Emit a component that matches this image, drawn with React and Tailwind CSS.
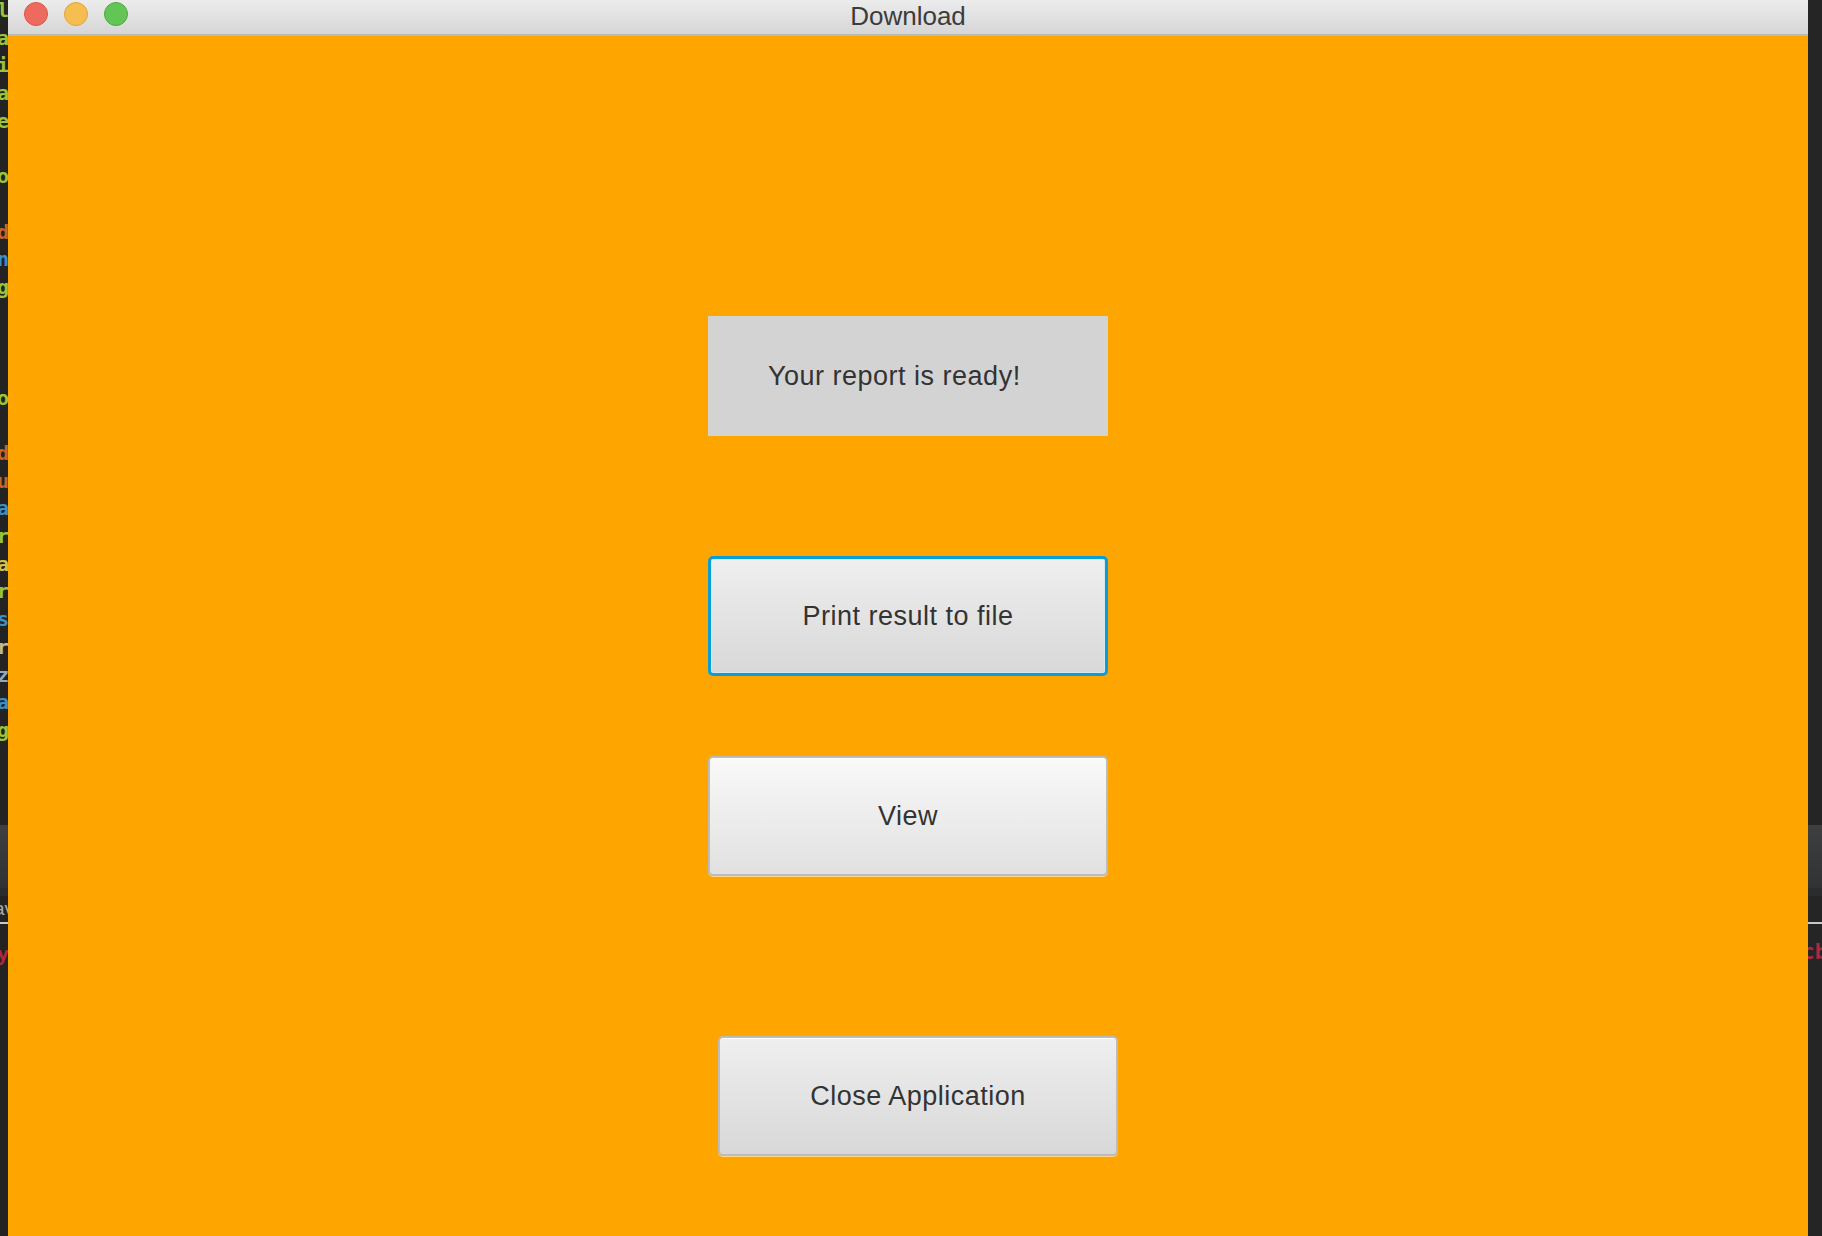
import React from 'react';

const CODE_ROWS = [
  { row: 0, ch: 'la', c: 'text-[#9cc43a]' },
  { row: 1, ch: 'a:', c: 'text-[#9cc43a]' },
  { row: 2, ch: 'i:', c: 'text-[#9cc43a]' },
  { row: 3, ch: 'a:', c: 'text-[#9cc43a]' },
  { row: 4, ch: 'e', c: 'text-[#9cc43a]' },
  { row: 6, ch: 'o', c: 'text-[#9cc43a]' },
  { row: 8, ch: 'd', c: 'text-[#c8652a]' },
  { row: 9, ch: 'n(', c: 'text-[#3b8fc2]' },
  { row: 10, ch: 'g(', c: 'text-[#9cc43a]' },
  { row: 14, ch: 'o', c: 'text-[#9cc43a]' },
  { row: 16, ch: 'd', c: 'text-[#c8652a]' },
  { row: 17, ch: 'u(', c: 'text-[#c8652a]' },
  { row: 18, ch: 'a(', c: 'text-[#3b8fc2]' },
  { row: 19, ch: 'r(', c: 'text-[#9cc43a]' },
  { row: 20, ch: 'a', c: 'text-[#d2c24c]' },
  { row: 21, ch: 'r(', c: 'text-[#9cc43a]' },
  { row: 22, ch: 's', c: 'text-[#3b8fc2]' },
  { row: 23, ch: 'r', c: 'text-[#c9b98c]' },
  { row: 24, ch: 'z', c: 'text-[#8ea9c2]' },
  { row: 25, ch: 'a(', c: 'text-[#3b8fc2]' },
  { row: 26, ch: 'g(', c: 'text-[#9cc43a]' },
];

function EditorBand({ children, bottom }) {
  // the strip of the editor tool window peeking out below the code
  return (
    <>
      <div className="h-[63px] bg-gradient-to-b from-[#3d3f41] to-[#303234]" />
      <div className="h-[8px] bg-[#2a2c2e]" />
      <div className="h-[26px] flex items-center overflow-hidden whitespace-nowrap">{children}</div>
      <div className="h-[2px] bg-[#c8c8c8]" />
      <div className="h-[50px] flex items-center overflow-hidden whitespace-nowrap">{bottom}</div>
    </>
  );
}

function LeftEdge() {
  const lines = [];
  for (let i = 0; i < 28; i++) {
    const hit = CODE_ROWS.find(r => r.row === i);
    lines.push(
      <div key={i} className={`h-[27.7px] leading-[27.7px] whitespace-nowrap ${hit ? hit.c : ''}`}>
        {hit ? hit.ch : '\u00a0'}
      </div>
    );
  }
  return (
    <div className="w-[8px] flex-shrink-0 flex flex-col bg-[#232323] overflow-hidden">
      <div className="h-[825px] overflow-hidden -ml-[3px] font-['DejaVu_Sans_Mono',monospace] text-[20px] font-bold">
        <div className="-mt-[3px]">{lines}</div>
      </div>
      <EditorBand
        bottom={<span className="-ml-[3px] mt-[10px] font-['DejaVu_Sans_Mono',monospace] text-[20px] font-bold text-[#b0283d]">y</span>}
      >
        <span className="-ml-[6px] font-['Liberation_Sans',sans-serif] text-[19px] text-[#a9abad]">av</span>
      </EditorBand>
    </div>
  );
}

function RightEdge() {
  return (
    <div className="w-[14px] flex-shrink-0 flex flex-col bg-[#252525] overflow-hidden">
      <div className="h-[825px]" />
      <EditorBand
        bottom={<span className="-ml-[6px] mt-[8px] font-['DejaVu_Sans_Mono',monospace] text-[21px] font-bold text-[#b0283d]">cb</span>}
      />
    </div>
  );
}

function TrafficLights() {
  return (
    <div className="flex items-start gap-[16px] pl-[16px] pt-[2px] self-stretch">
      <span className="w-[24px] h-[24px] rounded-full bg-[#ee6a5e] border border-[#d8574c]" />
      <span className="w-[24px] h-[24px] rounded-full bg-[#f6be50] border border-[#dea63a]" />
      <span className="w-[24px] h-[24px] rounded-full bg-[#62c555] border border-[#4dab3f]" />
    </div>
  );
}

function FxButton({ children, focused, light }) {
  const face = light
    ? 'bg-gradient-to-b from-[#f9f9f9] to-[#e1e1e1]'
    : 'bg-gradient-to-b from-[#efefef] to-[#d8d8d8]';
  const edge = focused
    ? 'border-[3px] border-[#0a9ed6] shadow-[inset_0_0_0_1px_#d2e8f4]'
    : 'border-2 border-[#bcbcbc] shadow-[inset_0_1px_0_#ffffff,0_1px_0_rgba(255,255,255,0.55)]';
  return (
    <button
      type="button"
      className={`w-[400px] h-[120px] rounded-[5px] flex items-center justify-center text-[27px] text-[#333333] tracking-[0.5px] ${face} ${edge}`}
    >
      {children}
    </button>
  );
}

export default function App() {
  return (
    <div className="h-screen w-full flex overflow-hidden bg-[#232323] font-['Liberation_Sans',Arial,sans-serif]">
      <LeftEdge />

      <div className="flex-1 min-w-0 flex flex-col">
        {/* title bar */}
        <div className="h-[36px] flex-shrink-0 grid grid-cols-[1fr_auto_1fr] items-center bg-gradient-to-b from-[#ececec] to-[#d6d6d6] border-b-2 border-[#bababa]">
          <TrafficLights />
          <div className="text-[26px] leading-none text-[#3c3c3c] -mt-[3px]">Download</div>
          <div />
        </div>

        {/* stage */}
        <div className="flex-1 bg-[#ffa500] flex flex-col">
          <div className="ml-[700px] mt-[280px] w-[400px] h-[120px] bg-[#d3d3d3] flex items-center pl-[60px] text-[27px] text-[#333333] tracking-[0.5px]">
            Your report is ready!
          </div>
          <div className="ml-[700px] mt-[120px]">
            <FxButton focused>Print result to file</FxButton>
          </div>
          <div className="ml-[700px] mt-[80px]">
            <FxButton light>View</FxButton>
          </div>
          <div className="ml-[710px] mt-[160px]">
            <FxButton>Close Application</FxButton>
          </div>
        </div>
      </div>

      <RightEdge />
    </div>
  );
}
